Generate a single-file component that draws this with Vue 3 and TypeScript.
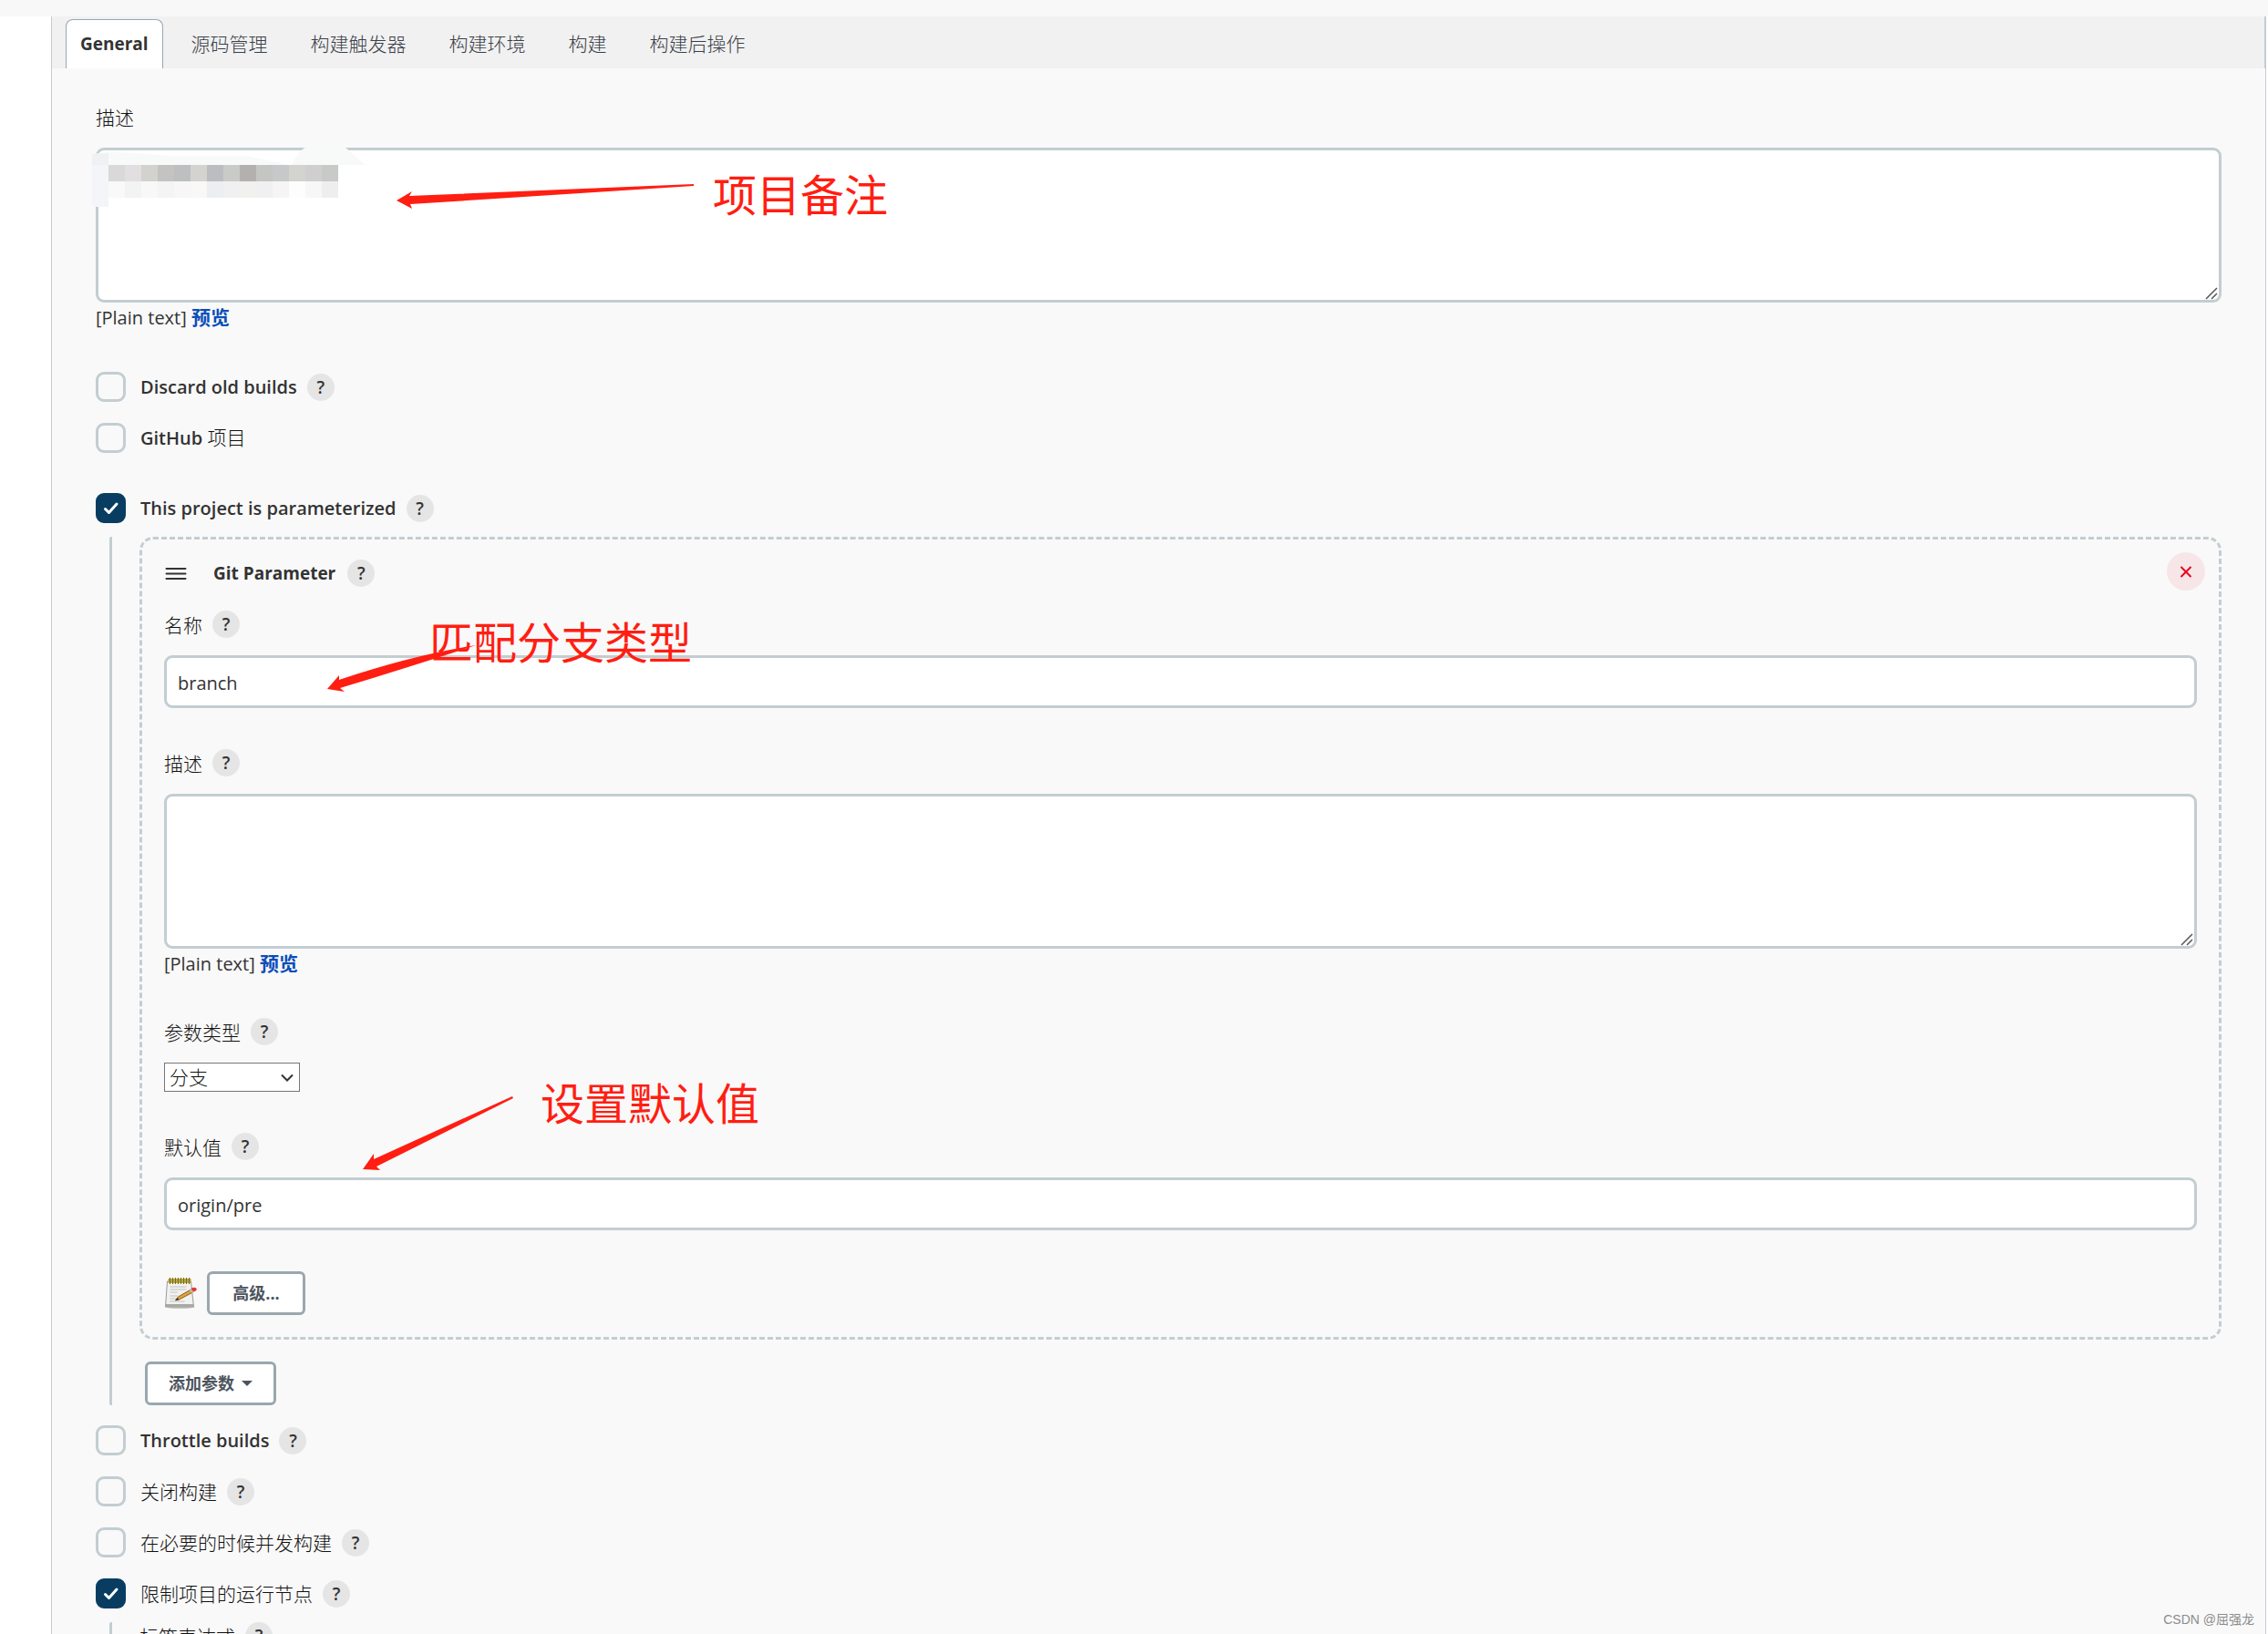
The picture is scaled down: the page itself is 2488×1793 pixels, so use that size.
<script setup lang="ts">
import { defineComponent, h, ref } from 'vue'

interface Option {
  id: string
  latin?: string
  label?: string
  checked: boolean
  help: boolean
}

const tabs = ['General', '源码管理', '构建触发器', '构建环境', '构建', '构建后操作']

const topOptions = ref<Option[]>([
  { id: 'discard', latin: 'Discard old builds', checked: false, help: true },
  { id: 'github', latin: 'GitHub ', label: '项目', checked: false, help: false },
])
const paramOption = ref<Option[]>([
  { id: 'parameterized', latin: 'This project is parameterized', checked: true, help: true },
])
const bottomOptions = ref<Option[]>([
  { id: 'throttle', latin: 'Throttle builds', checked: false, help: true },
  { id: 'disable', label: '关闭构建', checked: false, help: true },
  { id: 'concurrent', label: '在必要的时候并发构建', checked: false, help: true },
  { id: 'restrict', label: '限制项目的运行节点', checked: true, help: true },
])

const description = ref('')
const paramName = ref('branch')
const paramDescription = ref('')
const paramType = ref('分支')
const defaultValue = ref('origin/pre')

const mosaic = [
  ['#d9d9d9', '#e1dfe2', '#d3d2cf', '#c5c3c1', '#bebfc1', '#d3d3d0', '#bcbdc1', '#c9cbc9', '#b3b1af', '#c4c6c4', '#c7c8ca', '#d3d3cf', '#cfcfcf', '#c8cac8'],
  ['#f9f9f9', '#f3f3f3', '#f8f8f8', '#f4f4f5', '#f7f7f7', '#faf8f6', '#eceef0', '#f0f0f0', '#f1f1ef', '#f0f0f0', '#f5f5f5', '#fdfdfd', '#f7f7f7', '#eeeeee'],
]

const HelpButton = defineComponent({
  setup: () => () => h('button', { class: 'help', type: 'button', 'aria-label': '帮助' }, '?'),
})

const OptionList = defineComponent({
  props: { items: { type: Array as () => Option[], required: true } },
  setup: (props) => () =>
    props.items.map((o) =>
      h('div', { class: 'option', key: o.id }, [
        h('span', { class: 'tick' }, [
          h('input', {
            type: 'checkbox',
            id: o.id,
            checked: o.checked,
            onChange: (e: Event) => { o.checked = (e.target as HTMLInputElement).checked },
          }),
          h('svg', { viewBox: '0 0 33 33', 'aria-hidden': 'true' }, [h('path', { d: 'M10.500 17.500l4 4L23 12' })]),
        ]),
        h('label', { for: o.id }, [o.latin ? h('b', o.latin) : null, o.label]),
        o.help ? h(HelpButton) : null,
      ]),
    ),
})
</script>

<template>
  <div class="page">
    <main class="config">
      <nav class="tabs">
        <a v-for="(t, i) in tabs" :key="t" href="#" :class="['tab', { active: i === 0 }]">{{ t }}</a>
      </nav>
      <form class="body" @submit.prevent>
        <div class="field">
          <div class="caption"><label for="desc">描述</label></div>
          <textarea id="desc" v-model="description"></textarea>
          <div class="preview">[Plain text] <a href="#">预览</a></div>
        </div>

        <div class="options"><OptionList :items="topOptions" /></div>

        <div class="options checked"><OptionList :items="paramOption" /></div>
        <section class="nested">
          <div class="param">
            <button class="remove" type="button" aria-label="删除">
              <svg viewBox="0 0 42 42"><path d="M15.500 16l11 11M26.500 16l-11 11" /></svg>
            </button>
            <div class="param-head">
              <svg class="grip" viewBox="0 0 24 15"><path d="M2 2h21M2 7.500h21M2 13h21" /></svg>
              <strong>Git Parameter</strong>
              <HelpButton />
            </div>
            <div class="field">
              <div class="caption"><label for="pname">名称</label><HelpButton /></div>
              <input id="pname" v-model="paramName" class="text" type="text" />
            </div>
            <div class="field">
              <div class="caption"><label for="pdesc">描述</label><HelpButton /></div>
              <textarea id="pdesc" v-model="paramDescription"></textarea>
              <div class="preview">[Plain text] <a href="#">预览</a></div>
            </div>
            <div class="field">
              <div class="caption"><label for="ptype">参数类型</label><HelpButton /></div>
              <span class="select">
                <select id="ptype" v-model="paramType">
                  <option>分支</option>
                  <option>标签</option>
                </select>
                <svg viewBox="0 0 14 9" aria-hidden="true"><path d="M1 1.500l6 6 6-6" /></svg>
              </span>
            </div>
            <div class="field">
              <div class="caption"><label for="pdefault">默认值</label><HelpButton /></div>
              <input id="pdefault" v-model="defaultValue" class="text" type="text" />
            </div>
            <div class="advanced">
              <svg class="notepad" viewBox="0 0 36 36" aria-hidden="true">
                <ellipse cx="17" cy="33" rx="16" ry="2" fill="#c9c9c9" />
                <path d="M3 5h26l3 28H1z" fill="#f1f1f0" stroke="#9b9b98" />
                <path d="M1.500 30h30v3h-30z" fill="#a9aaa7" />
                <path d="M6 11h18M6 14h18M6 17h8M6 21h9M6 24h8M6 27h16" stroke="#c2c3c1" />
                <path d="M4 2h25v5H4z" fill="#b6a544" />
                <path d="M6 1v7M9 1v7M12 1v7M15 1v7M18 1v7M21 1v7M24 1v7M27 1v7" stroke="#7d6c18" />
                <path d="M12 26l3-4 14-8 2 3-15 8z" fill="#e5a33c" stroke="#8a5a1a" />
                <path d="M12 26l2-3 2 2z" fill="#3a3026" />
                <path d="M29 13l2-1q3-1 4 1t-2 3l-2 1z" fill="#e33a34" />
                <path d="M27 14l3 4 2-1-3-4z" fill="#b9bcc0" />
              </svg>
              <button class="btn more" type="button">高级...</button>
            </div>
          </div>
          <button class="btn add" type="button">
            添加参数
            <svg viewBox="0 0 12 6" aria-hidden="true"><path d="M0 0h12L6 6z" /></svg>
          </button>
        </section>

        <div class="options checked"><OptionList :items="bottomOptions" /></div>
        <section class="nested">
          <div class="caption"><label for="expr">标签表达式</label><HelpButton /></div>
          <input id="expr" class="text" type="text" />
        </section>
      </form>
    </main>

    <!-- Redacted description and hand-placed notes lie over the form -->
    <div class="overlay">
      <svg class="marks" aria-hidden="true">
        <path d="M101 170q8-3 18-3 30 0 66 4h84q24 4 51 11 8-22 25-23h30q6 4 26 22H101z" fill="#f8faf9" />
        <path d="M101 169l18-1v13h-18z" fill="#eef2f3" />
        <path d="M101 181h18v46h-14l-4-2z" fill="#f3f5f8" />
        <g v-for="(row, r) in mosaic" :key="r">
          <rect v-for="(c, i) in row" :key="i" :x="119 + i * 18" :y="181 + r * 18" width="18" height="18" :fill="c" />
        </g>
        <g fill="#ff1e12">
          <path d="M435 220l17-10-3 5 312-13v2L450 224l2 5z" />
          <path d="M359 756l13-15v5q80-27 150-38-70 23-149 47l5 4z" />
          <path d="M398 1283l12-17v6l152-69 1 2-150 75 4 4z" />
        </g>
      </svg>
      <span class="note note-remark">项目备注</span>
      <span class="note note-branch">匹配分支类型</span>
      <span class="note note-default">设置默认值</span>
      <span class="watermark">CSDN @屈强龙</span>
    </div>
  </div>
</template>

<style>
body {
  margin: 0;
  background: #fff;
}
</style>

<style scoped>
.page {
  position: relative;
  height: 100vh;
  overflow: hidden;
  box-sizing: border-box;
  border-top: 18px solid #f8f8f8;
  font-family: 'Open Sans', 'Noto Sans CJK SC', sans-serif;
  font-size: 21px;
  line-height: 30px;
  color: #333;
}
.page :deep(*) {
  box-sizing: border-box;
}
.config {
  margin: 0 2px 0 56px;
  border: solid #c3cdd2;
  border-width: 0 1px;
  background: #f9f9f9;
}
.tabs {
  display: flex;
  gap: 15px;
  height: 57px;
  padding: 3px 15px 0;
  background: #f1f1f1;
  border-right: 1px solid #c3cdd2;
}
.tab {
  padding: 11px 15px 0;
  border: 1px solid transparent;
  border-bottom: 0;
  border-radius: 8px 8px 0 0;
  color: #3a4048;
  font-weight: 300;
  text-decoration: none;
}
.tab.active {
  border-color: #9aa7af;
  background: #fff;
  color: #333;
  font-size: 19px;
  font-weight: 700;
}
.body {
  padding: 38px 48px;
}
.field {
  margin-bottom: 45px;
}
.caption {
  display: flex;
  align-items: center;
  gap: 11px;
  height: 30px;
  margin-bottom: 19px;
  color: #111;
  font-weight: 300;
}
.caption label {
  padding-top: 1px;
}
textarea,
.text {
  display: block;
  width: 100%;
  border: 3px solid #c3cdd2;
  border-radius: 9px;
  background: #fff;
  color: #333;
  font: inherit;
  font-size: 20px;
  padding: 0 12px;
}
textarea {
  height: 170px;
  resize: vertical;
}
textarea::-webkit-resizer {
  background: url("data:image/svg+xml,%3Csvg xmlns='http://www.w3.org/2000/svg' width='15' height='15'%3E%3Cpath d='M1 14L13 2M7 14l6-6' stroke='%23555' stroke-width='1.5'/%3E%3C/svg%3E") no-repeat;
}
.text {
  height: 58px;
  padding-top: 2px;
}
.preview {
  height: 31px;
  padding-top: 1px;
  font-size: 20px;
}
.preview a {
  color: #0b4eb8;
  font-size: 21px;
  font-weight: 700;
  text-decoration: none;
}
.options {
  margin-bottom: 44px;
}
.options.checked {
  margin-bottom: 15px;
}
.page :deep(.option) {
  display: flex;
  align-items: center;
  height: 33px;
}
.page :deep(.option + .option) {
  margin-top: 23px;
}
.page :deep(.option label) {
  margin: 0 11px 0 16px;
  color: #111;
  font-weight: 300;
  white-space: pre;
}
.page :deep(.option b) {
  color: #333;
  font-size: 20px;
  font-weight: 600;
}
.page :deep(.tick) {
  display: grid;
  width: 33px;
  height: 33px;
}
.page :deep(.tick > *) {
  grid-area: 1 / 1;
  width: 33px;
  height: 33px;
  margin: 0;
}
.page :deep(.tick input) {
  appearance: none;
  border: 3px solid #c3cdd2;
  border-radius: 9px;
}
.page :deep(.tick input:checked) {
  border-color: #083d61;
  background: #083d61;
}
.page :deep(.tick svg) {
  display: none;
  fill: none;
  stroke: #fff;
  stroke-width: 3;
  stroke-linecap: round;
  stroke-linejoin: round;
  pointer-events: none;
}
.page :deep(.tick input:checked + svg) {
  display: block;
}
.page :deep(.help) {
  flex: none;
  width: 30px;
  height: 30px;
  padding: 0;
  border: 0;
  border-radius: 50%;
  background: #e5e5e5;
  color: #333;
  font: 600 19px/30px 'Open Sans', sans-serif;
}
.nested {
  margin: 0 0 22px 15px;
  padding-left: 30px;
  border-left: 3px solid #c3cdd2;
  border-radius: 2px;
}
.param {
  position: relative;
  margin-bottom: 24px;
  padding: 22px 24px 24px;
  border: 3px dashed #c3cdd2;
  border-radius: 15px;
}
.remove {
  position: absolute;
  top: 14px;
  right: 15px;
  width: 42px;
  height: 42px;
  padding: 0;
  border: 0;
  border-radius: 50%;
  background: #f7e6e8;
}
.remove svg {
  display: block;
  fill: none;
  stroke: #e6001f;
  stroke-width: 2;
}
.param-head {
  display: flex;
  align-items: center;
  height: 30px;
  margin-bottom: 26px;
  font-size: 19px;
}
.param-head strong {
  margin: 0 13px 0 29px;
}
.grip {
  width: 25px;
  height: 15px;
  fill: none;
  stroke: #333;
  stroke-width: 2;
  stroke-linecap: round;
}
.select {
  display: inline-grid;
  align-items: center;
  width: 149px;
  height: 32px;
  vertical-align: top;
}
.select > * {
  grid-area: 1 / 1;
}
.select select {
  appearance: none;
  width: 149px;
  height: 32px;
  padding: 0 5px;
  border: 1px solid #767676;
  border-radius: 0;
  background: #fff;
  color: #111;
  font: inherit;
  font-weight: 300;
}
.select svg {
  justify-self: end;
  width: 14px;
  height: 9px;
  margin-right: 7px;
  fill: none;
  stroke: #333;
  stroke-width: 2;
  pointer-events: none;
}
.advanced {
  display: flex;
  align-items: center;
  gap: 10px;
}
.notepad {
  width: 37px;
  height: 36px;
}
.btn {
  display: flex;
  align-items: center;
  justify-content: center;
  gap: 8px;
  height: 48px;
  padding: 0 23px;
  border: 3px solid #9aa7af;
  border-radius: 6px;
  background: #fff;
  color: #4d545d;
  font: inherit;
  font-size: 18px;
  font-weight: 700;
}
.btn svg {
  width: 12px;
  height: 6px;
  fill: #4d545d;
}
.more {
  min-width: 108px;
}
.add {
  margin-left: 6px;
}
.overlay {
  position: absolute;
  inset: -18px 0 0;
  pointer-events: none;
}
.marks {
  position: absolute;
  width: 100%;
  height: 100%;
}
.note {
  position: absolute;
  color: #ff1e12;
  font-size: 48px;
  line-height: 60px;
  white-space: nowrap;
}
.note-remark {
  left: 782px;
  top: 184px;
}
.note-branch {
  left: 471px;
  top: 675px;
}
.note-default {
  left: 593px;
  top: 1181px;
}
.watermark {
  position: absolute;
  right: 15px;
  bottom: 6px;
  color: #8c8c8c;
  font: 14px/20px 'Liberation Sans', 'Noto Sans CJK SC', sans-serif;
}
</style>
